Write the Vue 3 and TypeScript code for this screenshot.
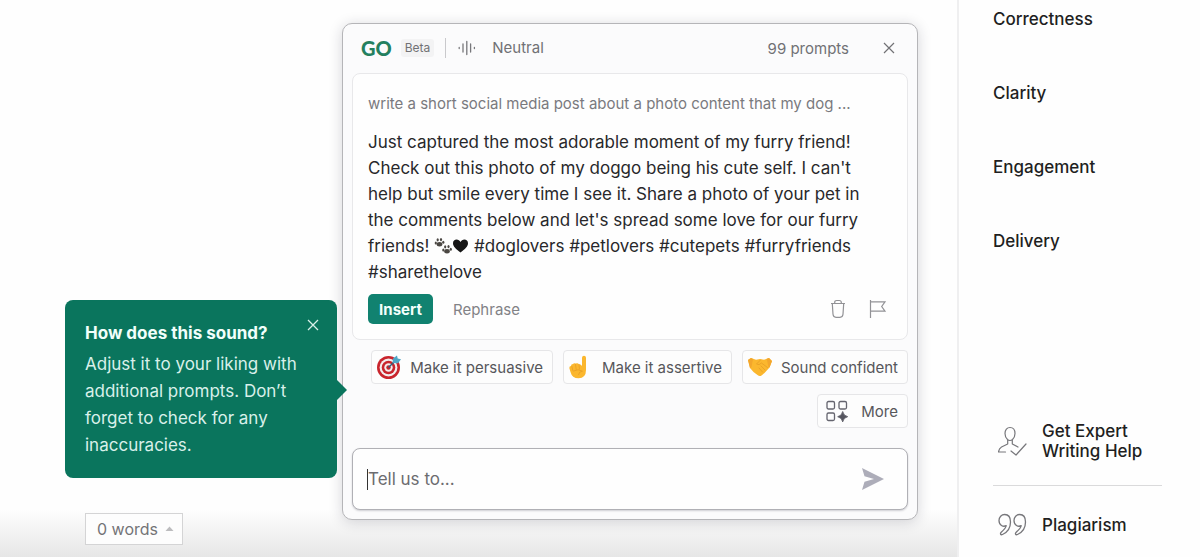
<script setup lang="ts">
import { ref } from 'vue'

const goals: string[] = ['Correctness', 'Clarity', 'Engagement', 'Delivery']
const hashtags: string[] = ['#doglovers', '#petlovers', '#cutepets', '#furryfriends', '#sharethelove']
const prompt = ref<string>('')
const message =
  "Just captured the most adorable moment of my furry friend! Check out this photo of my doggo being his cute self. I can't help but smile every time I see it. Share a photo of your pet in the comments below and let's spread some love for our furry"
</script>

<template>
  <div class="page">
    <main class="editor">
      <div class="left">
        <aside class="tip" role="dialog" aria-labelledby="tip-title">
          <h2 id="tip-title">How does this sound?</h2>
          <p>Adjust it to your liking with additional prompts. Don’t forget to check for any inaccuracies.</p>
          <button type="button" class="tip-close" aria-label="Close tip">
            <svg width="12" height="12" viewBox="0 0 12 12"><path d="M1 1l10 10M11 1L1 11" stroke="currentColor" stroke-width="1.3" fill="none" /></svg>
          </button>
        </aside>
        <button type="button" class="words">
          <span>0 words</span>
          <svg width="9" height="6" viewBox="0 0 9 6"><path d="M4.5 0.5L8.5 5H.5z" fill="#bcbcbe" /></svg>
        </button>
      </div>

      <section class="assistant" aria-label="Writing assistant">
        <header class="head">
          <span class="logo">GO</span>
          <span class="beta">Beta</span>
          <button type="button" class="tone">
            <svg width="18" height="16" viewBox="0 0 18 16" fill="none" stroke="#77777b" stroke-width="1.3" stroke-linecap="round"><path d="M1.2 7.5v1M5 4v8M8.8 1.5v13M12.6 4v8M16.4 7.5v1" /></svg>
            <span>Neutral</span>
          </button>
          <span class="quota">99 prompts</span>
          <button type="button" class="close" aria-label="Close">
            <svg width="12" height="12" viewBox="0 0 12 12"><path d="M1 1l10 10M11 1L1 11" stroke="currentColor" stroke-width="1.2" fill="none" /></svg>
          </button>
        </header>

        <article class="card">
          <p class="query">write a short social media post about a photo content that my dog ...</p>
          <p class="message">
            {{ message }}
            <span>friends!</span>
            <svg class="emoji" width="35" height="18" viewBox="0 0 35 18" role="img" aria-label="Paw prints and heart">
              <g fill="#4b4743">
                <g>
                  <ellipse cx="5.5" cy="7.3" rx="2.8" ry="2.2" />
                  <ellipse cx="1.8" cy="6" rx="1.1" ry="1.5" />
                  <ellipse cx="3.7" cy="2.8" rx="1.1" ry="1.6" />
                  <ellipse cx="7" cy="2.6" rx="1.1" ry="1.6" />
                  <ellipse cx="9.3" cy="5.2" rx="1.1" ry="1.5" />
                </g>
                <g transform="translate(7.5 7)">
                  <ellipse cx="5.5" cy="7.3" rx="2.8" ry="2.2" />
                  <ellipse cx="1.8" cy="6" rx="1.1" ry="1.5" />
                  <ellipse cx="3.7" cy="2.8" rx="1.1" ry="1.6" />
                  <ellipse cx="7" cy="2.6" rx="1.1" ry="1.6" />
                  <ellipse cx="9.3" cy="5.2" rx="1.1" ry="1.5" />
                </g>
              </g>
              <path d="M26.5 15.5C22 12 19 9.5 19 6.2 19 3.8 20.7 2.5 22.6 2.5c1.7 0 3.1 1 3.9 2.6.8-1.6 2.2-2.6 3.9-2.6 1.9 0 3.6 1.3 3.6 3.7 0 3.3-3 5.8-7.5 9.3z" fill="#161616" />
            </svg>
            <template v-for="tag in hashtags" :key="tag">{{ ' ' }}<span>{{ tag }}</span></template>
          </p>
          <div class="actions">
            <button type="button" class="insert">Insert</button>
            <button type="button" class="rephrase">Rephrase</button>
            <button type="button" class="icon trash" aria-label="Delete">
              <svg width="16" height="20" viewBox="0 0 16 20" fill="none" stroke="#929296" stroke-width="1.2"><path d="M1 4.5h14M4.7 4.3V3.5q0-2 2-2h2.6q2 0 2 2v.8M2.3 4.5l.7 10.8q.3 3 3 3h4q2.7 0 3-3l.7-10.8" /></svg>
            </button>
            <button type="button" class="icon" aria-label="Report">
              <svg width="18" height="20" viewBox="0 0 18 20" fill="none" stroke="#929296" stroke-width="1.2"><path d="M1.5 1v18M1.5 2.8H16l-3.3 4.7 3.3 4.7H1.5" /></svg>
            </button>
          </div>
        </article>

        <div class="chips">
          <button type="button" class="chip">
            <svg width="26" height="26" viewBox="0 0 26 26">
              <circle cx="12.5" cy="13.5" r="11.5" fill="#c9252d" />
              <circle cx="12.5" cy="13.5" r="8.9" fill="#f3eeee" />
              <circle cx="12.5" cy="13.5" r="6.8" fill="#c9252d" />
              <circle cx="12.5" cy="13.5" r="4.2" fill="#f3eeee" />
              <circle cx="12.5" cy="13.5" r="2.2" fill="#c9252d" />
              <path d="M12.5 13.5L20 6" stroke="#315f7b" stroke-width="1.5" />
              <path d="M16.5 9l.5-4.5L21 1.5l.7 3 3.3.7-3 4z" fill="#4fa6c6" />
            </svg>
            <span>Make it persuasive</span>
          </button>
          <button type="button" class="chip">
            <svg width="26" height="26" viewBox="0 0 26 26">
              <path d="M14 12V3.8Q14.1 1.7 16 1.7T18 3.8V16q0 8-7.5 8.3Q4 24.3 2.5 18L1.3 14q0-2 1.7-2Q3 10 5 10q1-1.3 2.6-.4Q9.8 8.5 10.9 10.2q2-.3 3.1 1.8z" fill="#fbb72e" />
              <path d="M3.9 12.5l.9 4M7.5 10.5l.7 5M11 10.5l.4 4.5M5.5 17q5-2.7 9 .2-3.5 0-4 3.5" fill="none" stroke="#e9a027" stroke-width=".9" stroke-linecap="round" />
            </svg>
            <span>Make it assertive</span>
          </button>
          <button type="button" class="chip">
            <svg width="26" height="26" viewBox="0 0 26 26">
              <path d="M1 6L4 4l5 1.7 4-.8 4 .8L22 4l3 3-2.5 6.5-5 5.5-3 2.500q-2 1.300-4-.5L6.500 18 3 14z" fill="#fbb72e" />
              <path d="M1 6L4 4 6 5 4.5 13 3 14zM25 7l-3-3-2.3.8L21.5 13l1 .5z" fill="#f3a62c" />
              <path d="M13.5 6l-4 4q2.500 1.800 5-1l6 4.500M14 12l4 4M12 14l3.500 4" fill="none" stroke="#e9a027" stroke-width=".9" stroke-linecap="round" />
            </svg>
            <span>Sound confident</span>
          </button>
          <button type="button" class="chip more">
            <svg width="22" height="22" viewBox="0 0 22 22" fill="none" stroke="#65656f" stroke-width="1.3"><rect x="1" y="1.5" width="7.5" height="7.5" rx="1.5" /><rect x="13" y="1.5" width="7.5" height="7.5" rx="1.5" /><rect x="1" y="13" width="7.5" height="7.5" rx="1.5" /><path d="M16.7 11.5q.8 4.4 5 5.2-4.2.8-5 5.2-.8-4.4-5-5.2 4.2-.8 5-5.2z" fill="#55555f" stroke="#55555f" stroke-width=".8" /></svg>
            <span>More</span>
          </button>
        </div>

        <form class="composer" @submit.prevent>
          <i class="caret"></i>
          <input v-model="prompt" type="text" placeholder="Tell us to..." aria-label="Tell us to..." />
          <button type="submit" aria-label="Send">
            <svg width="22" height="22" viewBox="0 0 22 22"><path d="M0 0l22 11L0 22l2.5-8.3L12 11 2.5 8.3z" fill="#adadb9" /></svg>
          </button>
        </form>
      </section>
    </main>

    <aside class="sidebar">
      <nav class="goals" aria-label="Suggestions">
        <a v-for="goal in goals" :key="goal" href="#">{{ goal }}</a>
      </nav>
      <div class="services">
        <a href="#" class="service expert">
          <svg width="30" height="30" viewBox="0 0 30 30" fill="none" stroke="#77777b" stroke-width="1.2" stroke-linecap="round" stroke-linejoin="round"><path d="M9.5 13.5C7.8 12 7 10 7 7.5c0-3.6 2-6 5-6s5 2.4 5 6c0 2.5-.8 4.5-2.5 6-1.5 1.2-3.5 1.2-5 0zM9.7 13.7V18l-6.2 3Q1 22.3.5 26h7M14.3 13.7V18l5.7 3M13 25l5 4L28 18" /></svg>
          <span>Get Expert<br />Writing Help</span>
        </a>
        <a href="#" class="service">
          <svg width="30" height="24" viewBox="0 0 30 24" fill="none" stroke="#77777b" stroke-width="1.3" stroke-linejoin="round"><path d="M3.5 12.5c-2-1.2-2.5-3-2.5-5 0-3.5 2.5-6 5.7-6 3.6 0 5.8 3 5.8 7.5 0 6-3.5 10.5-8 12.5-2 .8-2.7-1-1.3-2.3 2.8-2.5 4.8-4.7 5-6.5-1.7.8-3.4.6-4.7-.2z" /><path d="M18.5 12.5c-2-1.2-2.5-3-2.5-5 0-3.5 2.5-6 5.7-6 3.6 0 5.8 3 5.8 7.5 0 6-3.5 10.5-8 12.5-2 .8-2.7-1-1.3-2.3 2.8-2.5 4.8-4.7 5-6.5-1.7.8-3.4.6-4.7-.2z" /></svg>
          <span>Plagiarism</span>
        </a>
      </div>
    </aside>
  </div>
</template>

<style>
body {
  margin: 0;
  background: #fefefe;
}
</style>

<style scoped>
* {
  box-sizing: border-box;
}

.page {
  display: flex;
  min-height: 100vh;
  overflow: hidden;
  font-family: Inter, "Liberation Sans", sans-serif;
  color: #28282b;
  background: linear-gradient(to bottom, transparent calc(100% - 48px), #e6e6e6 100%), #fefefe;
}

button {
  margin: 0;
  padding: 0;
  border: 0;
  background: none;
  font: inherit;
  color: inherit;
  cursor: pointer;
}

a {
  color: inherit;
  text-decoration: none;
}

svg {
  flex: none;
  display: block;
}

h2,
p {
  margin: 0;
}

.editor {
  flex: 1;
  min-width: 0;
  display: flex;
  align-items: flex-start;
  gap: 5px;
  padding: 23px 39px 12px 65px;
}

.left {
  align-self: stretch;
  flex: none;
  width: 272px;
  display: flex;
  flex-direction: column;
  justify-content: flex-end;
  align-items: flex-start;
  gap: 35px;
}

.tip {
  position: relative;
  z-index: 1;
  width: 100%;
  padding: 20px 20px 19px;
  border-radius: 8px;
  background: #0a755d;
  color: #d9f0ea;
  font-size: 17px;
  line-height: 27px;
}

.tip::after {
  content: "";
  position: absolute;
  left: 100%;
  top: 50%;
  margin-top: -9px;
  border: solid transparent;
  border-width: 10px 0 10px 10px;
  border-left-color: #0a755d;
}

.tip h2 {
  margin-bottom: 4px;
  font-size: 17px;
  font-weight: 700;
  color: #f1fffb;
}

.tip-close {
  position: absolute;
  top: 19px;
  right: 18px;
}

.words {
  display: flex;
  align-items: center;
  gap: 7px;
  height: 32px;
  margin-left: 20px;
  padding: 0 8px 0 11px;
  border: 1px solid #d4d4d5;
  background: #fdfdfd;
  font-size: 16px;
  color: #747477;
}

.assistant {
  flex: 1;
  min-width: 0;
  padding: 0 9px 9px;
  border: 1px solid #b5b5b8;
  border-radius: 10px;
  background: #fbfbfc;
  box-shadow: 0 2px 14px rgba(30, 30, 50, 0.18);
}

.head {
  display: flex;
  align-items: center;
  height: 49px;
  padding: 0 13px 1px 9px;
  font-size: 15px;
  color: #717175;
}

.logo {
  font-family: Lato, Inter, sans-serif;
  font-weight: 900;
  font-size: 20px;
  color: #24805f;
}

.beta {
  margin-left: 9px;
  padding: 0 4px;
  border-radius: 3px;
  background: #f3f3f4;
  font-size: 12px;
  line-height: 18px;
}

.tone {
  display: flex;
  align-items: center;
  gap: 16px;
  margin-left: 11px;
  padding-left: 12px;
  border-left: 1px solid #c9c9cc;
  line-height: 20px;
}

.quota {
  margin-left: auto;
}

.close {
  margin-left: 34px;
}

.card {
  padding: 20px 16px 15px 15px;
  border: 1px solid #e8e8ea;
  border-radius: 8px;
  background: #fefefe;
}

.query {
  font-size: 15px;
  line-height: 20px;
  color: #7a7a7e;
}

.message {
  margin-top: 15px;
  padding-right: 12px;
  font-size: 17px;
  line-height: 26px;
}

.emoji {
  display: inline-block;
  margin-left: 5px;
  vertical-align: -3px;
}

.actions {
  display: flex;
  align-items: center;
  margin-top: 9px;
  font-size: 15px;
  color: #828286;
}

.insert {
  width: 65px;
  height: 30px;
  border-radius: 5px;
  background: #118270;
  color: #f4fffc;
  font-weight: 700;
}

.rephrase {
  margin-left: 20px;
}

.trash {
  margin: 0 23px 0 auto;
}

.icon:last-child {
  margin-right: 4px;
}

.chips {
  display: flex;
  flex-wrap: wrap;
  justify-content: flex-end;
  gap: 10px;
  margin: 10px 0 20px;
}

.chip {
  display: flex;
  align-items: center;
  gap: 8px;
  height: 34px;
  padding: 0 9px 0 4px;
  border: 1px solid #e6e6e8;
  border-radius: 4px;
  background: #fdfdfd;
  font-size: 15px;
  color: #57575b;
}

.more {
  gap: 13px;
  padding-left: 8px;
}

.composer {
  display: flex;
  align-items: center;
  height: 62px;
  padding: 0 23px 0 14px;
  border: 1px solid #b0b0b5;
  border-radius: 8px;
  background: #fefefe;
  box-shadow: 0 1px 2px rgba(30, 30, 50, 0.2);
}

.caret {
  width: 1px;
  height: 21px;
  background: #333;
}

.composer input {
  flex: 1;
  min-width: 0;
  padding: 0;
  border: 0;
  outline: 0;
  background: none;
  font: inherit;
  font-size: 17px;
  color: #28282b;
}

.composer input::placeholder {
  color: #6c6c70;
  opacity: 1;
}

.sidebar {
  flex: none;
  width: 243px;
  display: flex;
  flex-direction: column;
  justify-content: space-between;
  padding: 7px 38px 20px 34px;
  border-left: 2px solid #efeff0;
  background: #fefefe;
  font-size: 17px;
  font-weight: 500;
  color: #1f1f22;
}

.goals {
  display: flex;
  flex-direction: column;
  align-items: flex-start;
  gap: 50px;
  line-height: 24px;
}

.service {
  display: flex;
  align-items: center;
  gap: 14px;
  padding-left: 5px;
  line-height: 20px;
}

.expert {
  padding-bottom: 24px;
  margin-bottom: 27px;
  border-bottom: 1px solid #dadadb;
}
</style>
